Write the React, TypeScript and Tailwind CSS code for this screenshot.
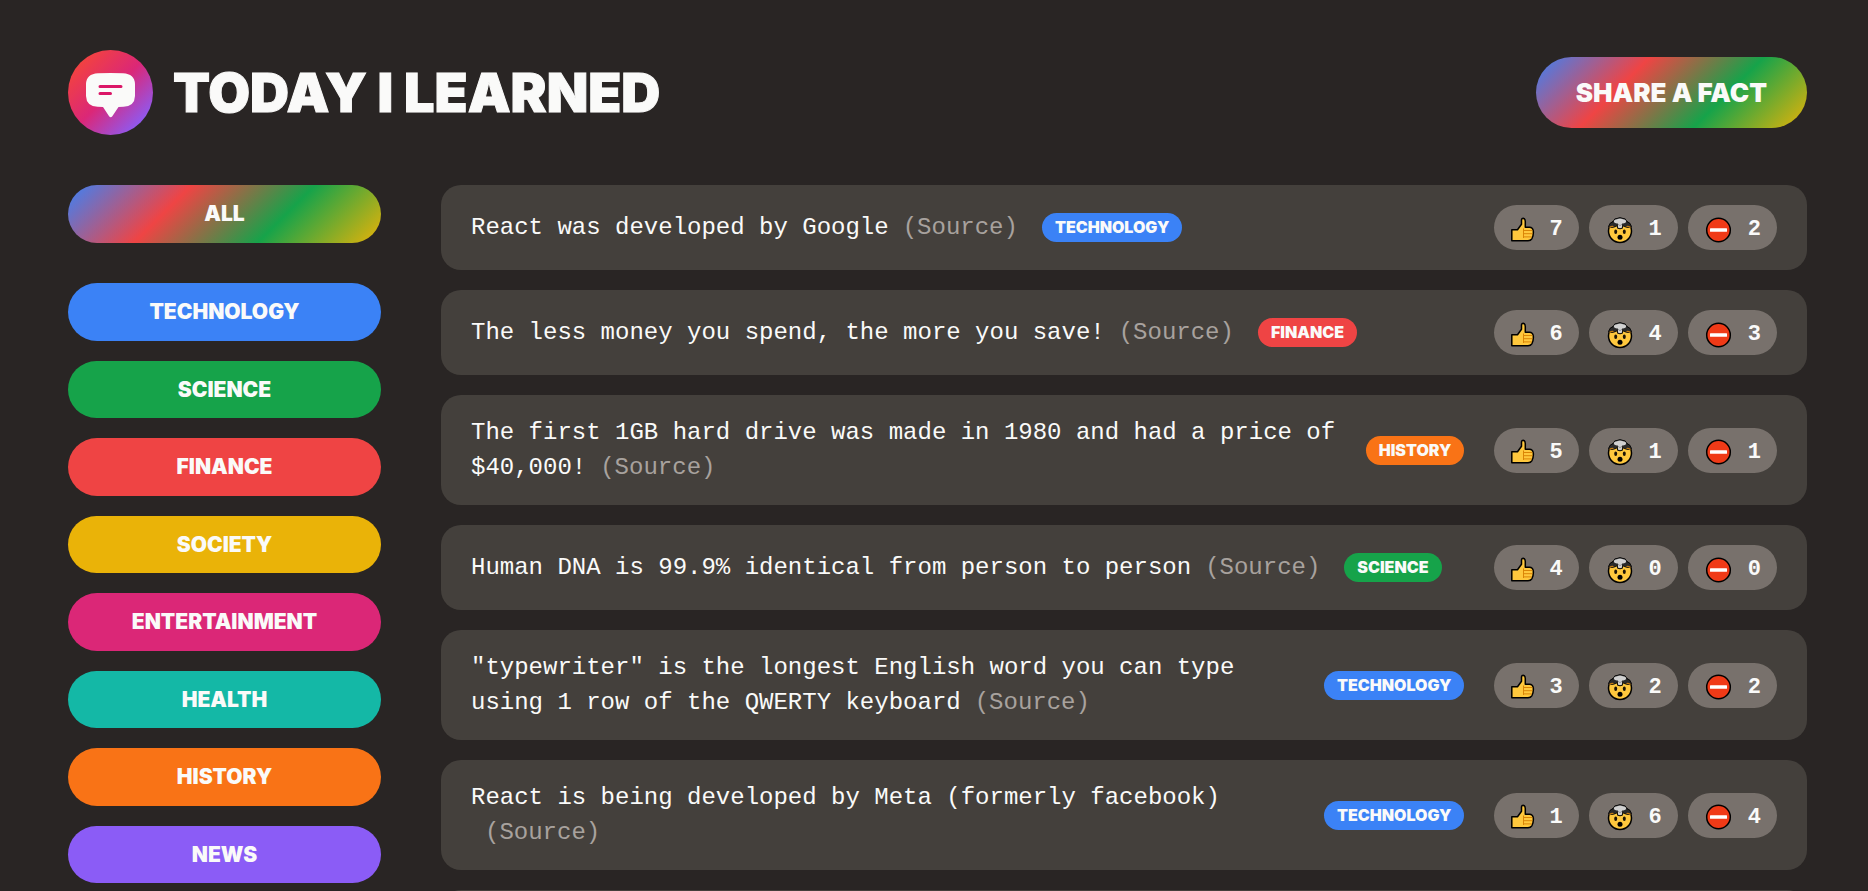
type Category = {
  name: string;
  color: string;
};

type Fact = {
  text: string;
  category: string;
  votes: [number, number, number];
};

const categories: Category[] = [
  { name: "technology", color: "bg-[#3b82f6]" },
  { name: "science", color: "bg-[#16a34a]" },
  { name: "finance", color: "bg-[#ef4444]" },
  { name: "society", color: "bg-[#eab308]" },
  { name: "entertainment", color: "bg-[#db2777]" },
  { name: "health", color: "bg-[#14b8a6]" },
  { name: "history", color: "bg-[#f97316]" },
  { name: "news", color: "bg-[#8b5cf6]" },
];

const facts: Fact[] = [
  { text: "React was developed by Google", category: "technology", votes: [7, 1, 2] },
  { text: "The less money you spend, the more you save!", category: "finance", votes: [6, 4, 3] },
  { text: "The first 1GB hard drive was made in 1980 and had a price of $40,000!", category: "history", votes: [5, 1, 1] },
  { text: "Human DNA is 99.9% identical from person to person", category: "science", votes: [4, 0, 0] },
  { text: '"typewriter" is the longest English word you can type using 1 row of the QWERTY keyboard', category: "technology", votes: [3, 2, 2] },
  { text: "React is being developed by Meta (formerly facebook)", category: "technology", votes: [1, 6, 4] },
];

const display = "font-['Inter',sans-serif] font-black uppercase text-[#fafaf9]";
const rainbow =
  "bg-[linear-gradient(135deg,#3b82f6,#ef4444,#16a34a,#eab308)]";

function Logo() {
  return (
    <svg className="size-[85px]" viewBox="0 0 85 85" aria-hidden="true">
      <defs>
        <linearGradient id="logo-fill" x1="0" y1="0" x2="1" y2="1">
          <stop offset="0.1" stopColor="#f5453a" />
          <stop offset="0.5" stopColor="#db2777" />
          <stop offset="0.88" stopColor="#8b5cf6" />
        </linearGradient>
      </defs>
      <circle cx="42.5" cy="42.5" r="42.5" fill="url(#logo-fill)" />
      <path
        d="M30 23.2Q42.5 22.6 55 23.2Q66.6 23.8 67 34V46Q66.6 56.3 55.5 56.8L50.5 57L44.3 66.3Q42.7 68.4 41.1 66.3L35 57L29.5 56.8Q18.4 56.3 18 46V34Q18.4 23.8 30 23.2Z"
        fill="#fafaf9"
      />
      <path d="M32 36.500H53M32 43.500H42.500" stroke="#db1767" strokeWidth="3" strokeLinecap="round" />
    </svg>
  );
}

function ThumbsUp() {
  return (
    <svg className="h-7 w-[27px] shrink-0" viewBox="0 0 27 28" aria-hidden="true">
      <path
        d="M1.8 13.8H7.5L11.5 8.3V3.8Q11.7 2.3 13.2 2.3Q15.3 2.5 15.3 5.5V11.2H19.5Q22.8 11.4 23.3 15Q23.7 19.5 21.8 22.8Q20.7 24.6 18 24.7H1.8Z"
        fill="#ffc83d"
        stroke="#000"
        strokeWidth="1.5"
        strokeLinejoin="round"
      />
      <path d="M14 14.5H22.3M14 17.7H22.5M14 20.9H21.8M13.5 12.5V22" stroke="#d67d00" strokeWidth="0.9" fill="none" />
    </svg>
  );
}

function MindBlown() {
  return (
    <svg className="h-7 w-8 shrink-0" viewBox="0 0 32 28" aria-hidden="true">
      <circle cx="15" cy="15" r="11.5" fill="#ffc83d" stroke="#000" strokeWidth="1.5" />
      <path
        d="M3.5 10.5Q4.5 6.2 8.5 5.5Q9 2 12.5 2.3Q15 .8 17.5 2.3Q21 2 21.5 5.5Q25.5 6.2 26.5 10.5Q25 12.2 21.5 11.3L17.5 9.8V12.2Q15 13.5 12.5 12.2V9.8L8.5 11.3Q5 12.2 3.5 10.5Z"
        fill="#2b2b2b"
        stroke="#000"
        strokeWidth="0.8"
      />
      <path
        d="M8.8 6Q8.8 3.2 12 3.2Q15 1.8 18 3.2Q21.2 3.2 21.2 6Q20 7.8 17 7.4V11.5Q15 12.5 13 11.5V7.4Q10 7.8 8.8 6Z"
        fill="#d1d1d1"
      />
      <path d="M13 8.300L15 9.600L17 8.300" stroke="#8c8c8c" strokeWidth="0.9" fill="none" />
      <path d="M4.5 11.5Q6.5 10 8.5 10.5M21.5 10.5Q23.5 10 25.5 11.5" stroke="#c27a12" strokeWidth="1.2" fill="none" />
      <ellipse cx="10.7" cy="15.7" rx="1.5" ry="2.3" fill="#1c1408" />
      <ellipse cx="19.3" cy="15.7" rx="1.5" ry="2.3" fill="#1c1408" />
      <circle cx="15" cy="21.2" r="2.5" fill="#000" />
    </svg>
  );
}

function NoEntry() {
  return (
    <svg className="h-7 w-8 shrink-0" viewBox="0 0 32 28" aria-hidden="true">
      <circle cx="14.5" cy="14" r="11.8" fill="#f03a17" stroke="#000" strokeWidth="1.5" />
      <rect x="6" y="12.2" width="17" height="3.6" rx="0.5" fill="#fff" />
    </svg>
  );
}

function FactCard({ fact }: { fact: Fact }) {
  const color = categories.find((c) => c.name === fact.category)?.color;
  const buttons = [
    { label: "Interesting", icon: <ThumbsUp /> },
    { label: "Mindblowing", icon: <MindBlown /> },
    { label: "False", icon: <NoEntry /> },
  ];
  return (
    <li className="flex items-center rounded-[20px] bg-[#44403c] px-[30px] py-5 text-2xl leading-[35px]">
      <p>
        {fact.text}
        <a href="#source" className="ml-[14px] inline-block text-[#a8a29e]">
          (Source)
        </a>
      </p>
      <span className={`${display} ${color} ml-6 shrink-0 rounded-full px-[13px] text-base leading-[29px]`}>
        {fact.category}
      </span>
      <div className="ml-auto flex shrink-0 gap-[10px] pl-[30px]">
        {buttons.map((b, i) => (
          <button
            key={b.label}
            type="button"
            aria-label={`${b.label} ${fact.votes[i]}`}
            className="flex h-[45px] items-center gap-3 rounded-full bg-[#78716c] px-4 pt-1 text-[22px] font-bold text-[#fafaf9]"
          >
            {b.icon}
            <span>{fact.votes[i]}</span>
          </button>
        ))}
      </div>
    </li>
  );
}

export default function App() {
  return (
    <div className="h-screen overflow-hidden bg-[#292524] pt-[50px] pr-[61px] pl-[68px] font-['Liberation_Mono',monospace] text-[#fafaf9]">
      <header className="mb-[50px] flex items-center justify-between">
        <div className="flex items-center gap-5">
          <Logo />
          <h1 className={`${display} text-[54px] leading-none [-webkit-text-stroke:1px_#fafaf9]`}>Today I Learned</h1>
        </div>
        <button type="button" className={`${display} ${rainbow} h-[71px] rounded-full px-10 text-[26px]`}>
          Share a fact
        </button>
      </header>

      <main className="grid grid-cols-[313px_1fr] items-start gap-[60px]">
        <aside>
          <button type="button" className={`${display} ${rainbow} mb-10 h-[58px] w-full rounded-full text-[21px]`}>
            All
          </button>
          <ul className="grid min-h-[600px] auto-rows-fr gap-5">
            {categories.map((c) => (
              <li key={c.name} className="flex">
                <button type="button" className={`${display} ${c.color} w-full rounded-full text-[21px]`}>
                  {c.name}
                </button>
              </li>
            ))}
          </ul>
        </aside>

        <ul className="flex flex-col gap-5">
          {facts.map((f) => (
            <FactCard key={f.text} fact={f} />
          ))}
          <li className="h-[85px] rounded-[20px] bg-[#44403c]" />
        </ul>
      </main>
    </div>
  );
}
